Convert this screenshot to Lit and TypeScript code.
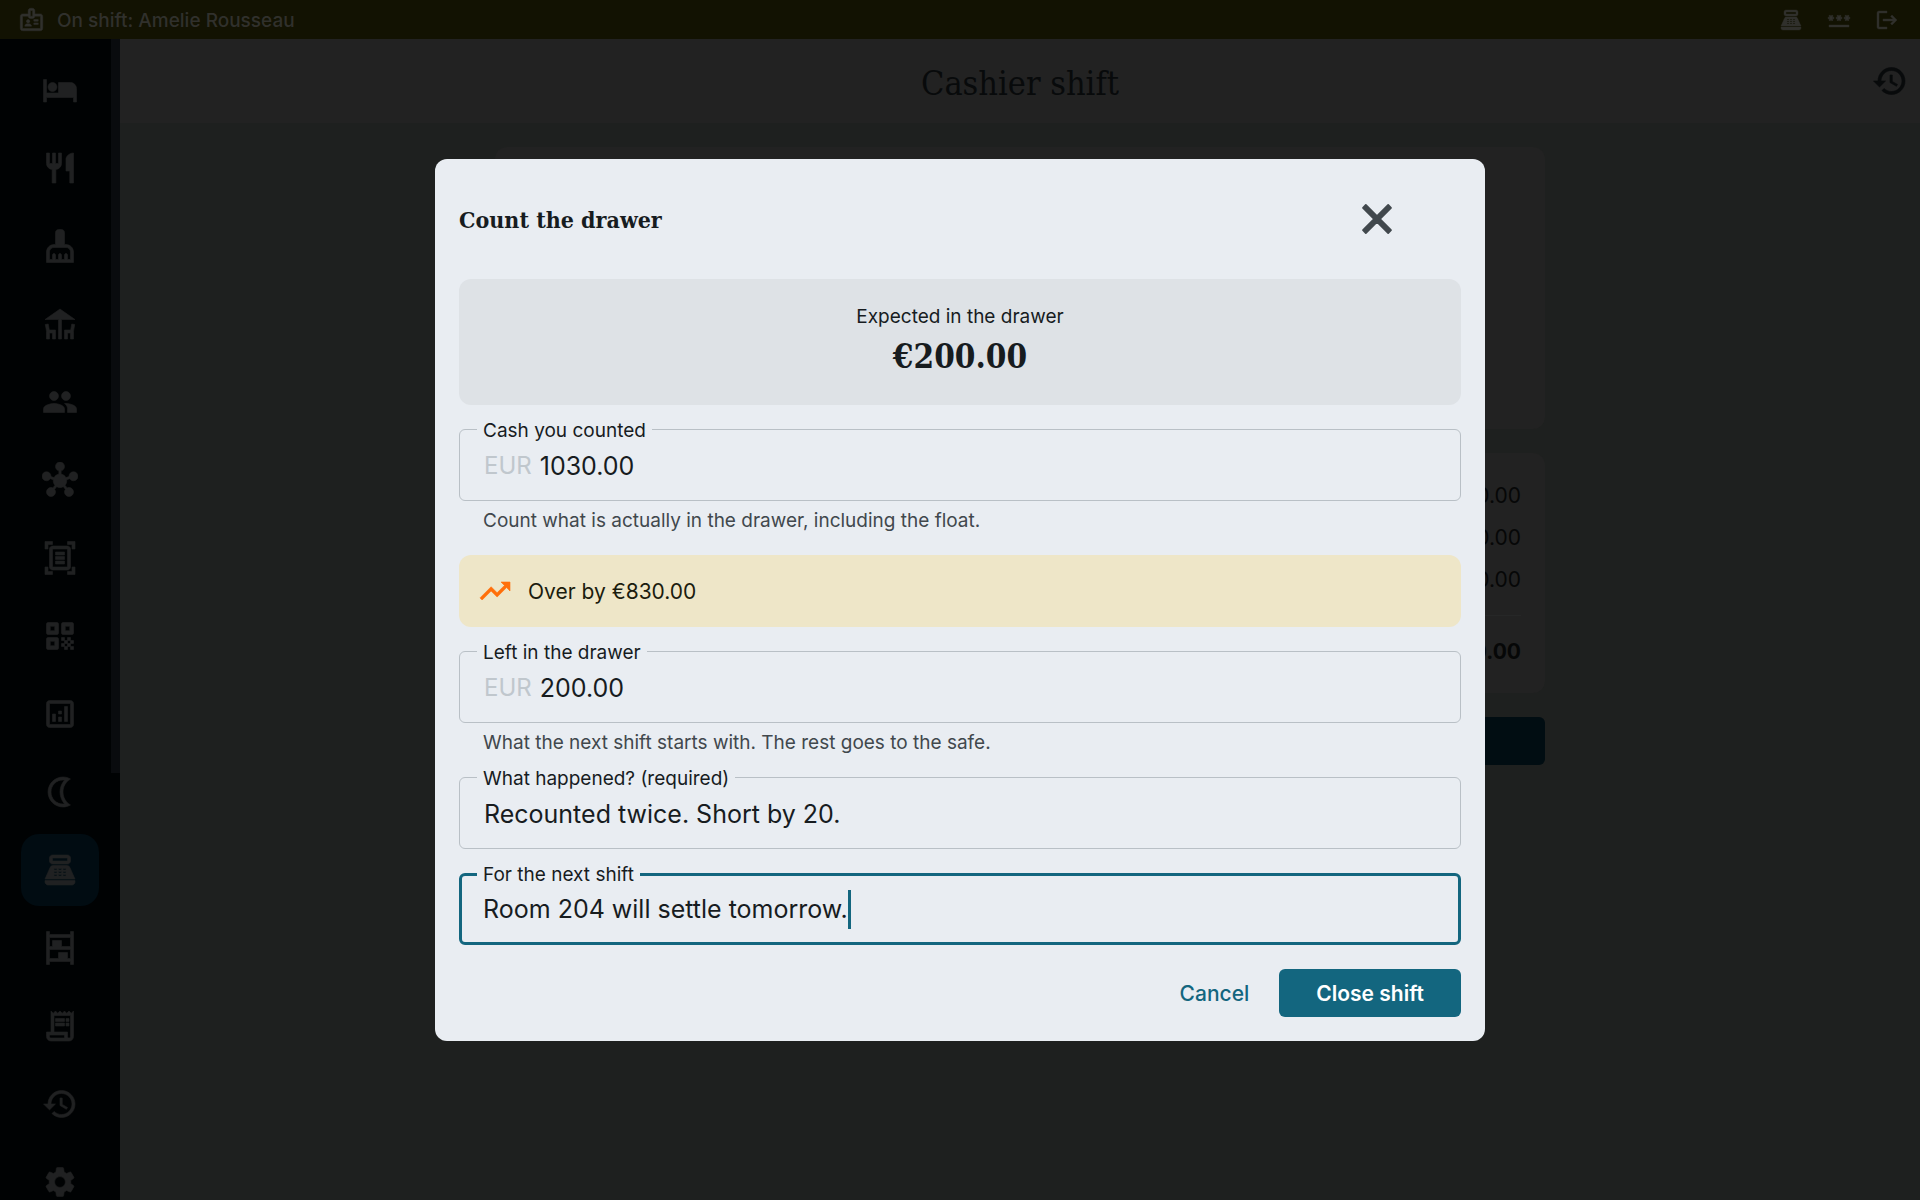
import { LitElement, html, css, svg, nothing } from "lit";
import { customElement, property } from "lit/decorators.js";
import { classMap } from "lit/directives/class-map.js";

const icons: Record<string, unknown> = {
  bed: svg`<path d="M7 13c1.66 0 3-1.34 3-3S8.66 7 7 7s-3 1.34-3 3 1.34 3 3 3zm12-6h-8v7H3V5H1v15h2v-3h18v3h2v-9c0-2.21-1.79-4-4-4z"/>`,
  restaurant: svg`<path d="M11 9H9V2H7v7H5V2H3v7c0 2.12 1.66 3.84 3.75 3.97V22h2.5v-9.03C11.34 12.84 13 11.12 13 9V2h-2v7zm5-3v8h2.5v8H21V2c-2.76 0-5 2.24-5 4z"/>`,
  cleaning: svg`<path d="M16 11h-1V3c0-1.1-.9-2-2-2h-2c-1.1 0-2 .9-2 2v8H8c-2.76 0-5 2.24-5 5v7h18v-7c0-2.76-2.24-5-5-5zm3 10h-2v-3c0-.55-.45-1-1-1s-1 .45-1 1v3h-2v-3c0-.55-.45-1-1-1s-1 .45-1 1v3H9v-3c0-.55-.45-1-1-1s-1 .45-1 1v3H5v-5c0-1.65 1.35-3 3-3h8c1.65 0 3 1.35 3 3v5z"/>`,
  deck: svg`<path d="M22 9L12 2 2 9h9v13h2V9zM4.14 12l-1.96.37.82 4.37V22h2l.02-4H7v4h2v-6H4.9zM19.1 16H15v6h2v-4h1.98l.02 4h2v-5.26l.82-4.37-1.96-.37z"/>`,
  people: svg`<path d="M16 11c1.66 0 2.99-1.34 2.99-3S17.66 5 16 5c-1.66 0-3 1.34-3 3s1.34 3 3 3zm-8 0c1.66 0 2.99-1.34 2.99-3S9.66 5 8 5C6.34 5 5 6.34 5 8s1.34 3 3 3zm0 2c-2.33 0-7 1.17-7 3.5V19h14v-2.5c0-2.33-4.67-3.5-7-3.5zm8 0c-.29 0-.62.02-.97.05 1.16.84 1.97 1.97 1.97 3.45V19h6v-2.5c0-2.33-4.67-3.5-7-3.5z"/>`,
  hub: svg`<path d="M8.4,18.2C8.78,18.7,9,19.32,9,20c0,1.66-1.34,3-3,3s-3-1.34-3-3s1.34-3,3-3c0.44,0,0.85,0.09,1.23,0.26l1.41-1.77c-0.92-1.03-1.29-2.39-1.09-3.69l-2.03-0.68C4.98,11.95,4.06,12.5,3,12.5c-1.66,0-3-1.34-3-3s1.34-3,3-3s3,1.34,3,3c0,0.07,0,0.14-0.01,0.21l2.03,0.68c0.64-1.21,1.82-2.09,3.22-2.32l0-2.16C9.96,5.57,9,4.4,9,3c0-1.66,1.34-3,3-3s3,1.34,3,3c0,1.4-0.96,2.57-2.25,2.91v2.16c1.4,0.23,2.58,1.11,3.22,2.32l2.03-0.68C18,9.64,18,9.57,18,9.5c0-1.66,1.34-3,3-3s3,1.34,3,3s-1.34,3-3,3c-1.06,0-1.98-0.55-2.52-1.37l-2.03,0.68c0.2,1.29-0.16,2.65-1.09,3.69l1.41,1.77C17.15,17.09,17.56,17,18,17c1.66,0,3,1.34,3,3s-1.34,3-3,3s-3-1.34-3-3c0-0.68,0.22-1.3,0.6-1.8l-1.41-1.77c-1.35,0.75-3.01,0.76-4.37,0L8.4,18.2z"/>`,
  scanner: svg`<path fill-rule="evenodd" d="M7 3H4v3H2V1h5v2zm15 3V1h-5v2h3v3h2zM7 21H4v-3H2v5h5v-2zm13-3v3h-3v2h5v-5h-2zM19 18c0 1.1-.9 2-2 2H7c-1.1 0-2-.9-2-2V6c0-1.1.9-2 2-2h10c1.1 0 2 .9 2 2v12zM17 6H7v12h10V6zm-2 2H9v2h6V8zm0 3H9v2h6v-2zm0 3H9v2h6v-2z"/>`,
  qr: svg`<path fill-rule="evenodd" d="M4 3h6a1 1 0 0 1 1 1v6a1 1 0 0 1-1 1H4a1 1 0 0 1-1-1V4a1 1 0 0 1 1-1zM5.5 5.5v3h3v-3zM14 3h6a1 1 0 0 1 1 1v6a1 1 0 0 1-1 1h-6a1 1 0 0 1-1-1V4a1 1 0 0 1 1-1zM15.5 5.5v3h3v-3zM4 13h6a1 1 0 0 1 1 1v6a1 1 0 0 1-1 1H4a1 1 0 0 1-1-1v-6a1 1 0 0 1 1-1zM5.5 15.5v3h3v-3zM13 13h2v2h-2zM17 13h2v2h-2zM15 15h2v2h-2zM19 15h2v2h-2zM13 17h2v2h-2zM17 17h2v2h-2zM15 19h2v2h-2zM19 19h2v2h-2z"/>`,
  analytics: svg`<path fill-rule="evenodd" d="M19 3H5c-1.1 0-2 .9-2 2v14c0 1.1.9 2 2 2h14c1.1 0 2-.9 2-2V5c0-1.1-.9-2-2-2zm0 16H5V5h14v14zM7 12h2v5H7zM15 7h2v10h-2zM11 14h2v3h-2zM11 10h2v2h-2z"/>`,
  moon: svg`<path fill-rule="evenodd" d="M14 2c1.82 0 3.53.5 5 1.35-2.99 1.73-5 4.95-5 8.65s2.01 6.92 5 8.65C17.53 21.5 15.82 22 14 22 8.48 22 4 17.52 4 12S8.48 2 14 2zM14 4c-4.41 0-8 3.59-8 8s3.59 8 8 8c.34 0 .68-.02 1.01-.07C13.1 17.7 12 14.92 12 12s1.1-5.7 3.01-7.93C14.68 4.02 14.34 4 14 4z"/>`,
  register: svg`<path fill-rule="evenodd" d="M17 2H7c-1.1 0-2 .9-2 2v2c0 1.1.9 2 2 2h10c1.1 0 2-.9 2-2V4c0-1.1-.9-2-2-2zm0 4H7V4h10v2zM20 22H4c-1.1 0-2-.9-2-2v-1h20v1c0 1.1-.9 2-2 2zM18.53 10.19C18.21 9.47 17.49 9 16.7 9H7.3c-.79 0-1.51.47-1.83 1.19L2 18h20l-3.47-7.81zM8 11h2v1H8zM8 13h2v1H8zM8 15h2v1H8zM11 11h2v1h-2zM11 13h2v1h-2zM11 15h2v1h-2zM14 11h2v1h-2zM14 13h2v1h-2zM14 15h2v1h-2z"/>`,
  shelves: svg`<path fill-rule="evenodd" d="M19 1v2H5V1H3v22h2v-2h14v2h2V1h-2zM19 5v6h-6V7H7v4H5V5h14zM5 13h14v6h-2v-4h-6v4H5v-6z"/>`,
  receipt: svg`<path d="M19.5 3.5L18 2l-1.5 1.5L15 2l-1.5 1.5L12 2l-1.5 1.5L9 2 7.5 3.5 6 2v14H3v3c0 1.66 1.34 3 3 3h12c1.66 0 3-1.34 3-3V2l-1.5 1.5zM15 20H6c-.55 0-1-.45-1-1v-1h10v2zm4-1c0 .55-.45 1-1 1s-1-.45-1-1v-3H8V5h11v14z"/><path d="M9 7h6v2H9zM16 7h2v2h-2zM9 10h6v2H9zM16 10h2v2h-2z"/>`,
  history: svg`<path d="M13 3c-4.97 0-9 4.03-9 9H1l3.89 3.89.07.14L9 12H6c0-3.87 3.13-7 7-7s7 3.13 7 7-3.13 7-7 7c-1.93 0-3.68-.79-4.94-2.06l-1.42 1.42C8.27 19.99 10.51 21 13 21c4.97 0 9-4.03 9-9s-4.03-9-9-9zm-1 5v5l4.28 2.54.72-1.21-3.5-2.08V8H12z"/>`,
  settings: svg`<path d="M19.14 12.94c.04-.3.06-.61.06-.94 0-.32-.02-.64-.07-.94l2.03-1.58c.18-.14.23-.41.12-.61l-1.92-3.32c-.12-.22-.37-.29-.59-.22l-2.39.96c-.5-.38-1.03-.7-1.62-.94l-.36-2.54c-.04-.24-.24-.41-.48-.41h-3.84c-.24 0-.43.17-.47.41l-.36 2.54c-.59.24-1.13.57-1.62.94l-2.39-.96c-.22-.08-.47 0-.59.22L2.74 8.87c-.12.21-.08.47.12.61l2.03 1.58c-.05.3-.09.63-.09.94s.02.64.07.94l-2.03 1.58c-.18.14-.23.41-.12.61l1.92 3.32c.12.22.37.29.59.22l2.39-.96c.5.38 1.03.7 1.62.94l.36 2.54c.05.24.24.41.48.41h3.84c.24 0 .44-.17.47-.41l.36-2.54c.59-.24 1.13-.56 1.62-.94l2.39.96c.22.08.47 0 .59-.22l1.92-3.32c.12-.22.07-.47-.12-.61l-2.01-1.58zM12 15.6c-1.98 0-3.6-1.62-3.6-3.6s1.62-3.6 3.6-3.6 3.6 1.62 3.6 3.6-1.62 3.6-3.6 3.6z"/>`,
  badge: svg`<path fill-rule="evenodd" d="M20 7h-5V4c0-1.1-.9-2-2-2h-2c-1.1 0-2 .9-2 2v3H4c-1.1 0-2 .9-2 2v11c0 1.1.9 2 2 2h16c1.1 0 2-.9 2-2V9c0-1.1-.9-2-2-2zm-9-3h2v5h-2V4zm9 16H4V9h5c0 1.1.9 2 2 2h2c1.1 0 2-.9 2-2h5v11z"/><circle cx="9" cy="13.5" r="1.5"/><path d="M11.08 16.18C10.44 15.9 9.74 15.75 9 15.75s-1.44.15-2.08.43C6.36 16.42 6 16.96 6 17.57V18h6v-.43c0-.61-.36-1.15-.92-1.39zM14 12h4v1.5h-4zM14 15h4v1.5h-4z"/>`,
  password: svg`<path d="M2 17h20v2H2v-2zm1.15-4.05L4 11.47l.85 1.48 1.3-.75-.85-1.48H7v-1.5H5.3l.85-1.47L4.85 7 4 8.47 3.15 7l-1.3.75.85 1.47H1v1.5h1.7l-.85 1.48 1.3.75zm6.7-.75l1.3.75.85-1.48.85 1.48 1.3-.75-.85-1.48H15v-1.5h-1.7l.85-1.47-1.3-.75L12 8.47 11.15 7l-1.3.75.85 1.47H9v1.5h1.7l-.85 1.48zM23 9.22h-1.7l.85-1.47-1.3-.75L20 8.47 19.15 7l-1.3.75.85 1.47H17v1.5h1.7l-.85 1.48 1.3.75.85-1.48.85 1.48 1.3-.75-.85-1.48H23v-1.5z"/>`,
  logout: svg`<path d="M17 7l-1.41 1.41L18.17 11H8v2h10.17l-2.58 2.58L17 17l5-5zM4 5h8V3H4c-1.1 0-2 .9-2 2v14c0 1.1.9 2 2 2h8v-2H4V5z"/>`,
  close: svg`<path stroke-width="0.9" stroke-linejoin="round" d="M19 6.41L17.59 5 12 10.59 6.41 5 5 6.41 10.59 12 5 17.59 6.41 19 12 13.41 17.59 19 19 17.59 13.41 12z"/>`,
  trending: svg`<path d="M16 6l2.29 2.29-4.88 4.88-4-4L2 16.59 3.41 18l6-6 4 4 6.3-6.29L22 12V6z"/>`,
};

@customElement("app-icon")
export class AppIcon extends LitElement {
  @property() name = "";

  static styles = css`
    :host { display: block; flex: none; width: 36px; height: 36px; }
    .glyph { display: block; width: 100%; height: 100%; fill: currentColor; stroke: currentColor; stroke-width: 0.4; }
  `;

  render() {
    return html`<svg class="glyph" viewBox="0 0 24 24" aria-hidden="true">${icons[this.name]}</svg>`;
  }
}

@customElement("text-field")
export class TextField extends LitElement {
  @property() label = "";
  @property() value = "";
  @property() prefixText = "";
  @property() helper = "";
  @property({ type: Boolean }) active = false;

  static styles = css`
    :host { display: block; }
    * { box-sizing: border-box; }
    .box {
      position: relative;
      display: flex;
      align-items: center;
      height: 72px;
      padding: 2px 24px 0;
      border: 1px solid #b9c0c6;
      border-radius: 6px;
    }
    .box.active { border: 3px solid #13667f; padding: 0 21px; }
    .label {
      position: absolute;
      top: -11px;
      left: 17px;
      padding: 0 6px;
      background: #e9edf2;
      font-size: 19px;
      line-height: 24px;
      color: #171c1f;
    }
    .active .label { top: -13px; left: 15px; }
    .prefix { margin-right: 8px; font-size: 24px; line-height: 36px; color: #c0c7cd; }
    .input {
      min-width: 0;
      flex: 1;
      padding: 0;
      border: 0;
      outline: 0;
      background: none;
      font: inherit;
      font-size: 25px;
      line-height: 36px;
      color: #171c1f;
    }
    .active .input { flex: none; max-width: 100%; field-sizing: content; caret-color: transparent; }
    .caret { width: 3px; height: 39px; background: #13667f; }
    .helper { margin: 0; padding: 8px 24px 0; height: 30px; font-size: 19px; line-height: 24px; color: #41484d; }
  `;

  render() {
    return html`
      <div class=${classMap({ box: true, active: this.active })}>
        <label class="label" for="control">${this.label}</label>
        ${this.prefixText ? html`<span class="prefix">${this.prefixText}</span>` : nothing}
        <input class="input" id="control" type="text" .value=${this.value} />
        ${this.active ? html`<span class="caret"></span>` : nothing}
      </div>
      ${this.helper ? html`<p class="helper">${this.helper}</p>` : nothing}
    `;
  }
}

const NAV = [
  ["bed", "Rooms"], ["restaurant", "Restaurant"], ["cleaning", "Housekeeping"], ["deck", "Terrace"],
  ["people", "Guests"], ["hub", "Channels"], ["scanner", "Scanner"], ["qr", "QR codes"],
  ["analytics", "Reports"], ["moon", "Night audit"], ["register", "Cashier"], ["shelves", "Stock"],
  ["receipt", "Invoices"], ["history", "History"], ["settings", "Settings"],
];

@customElement("app-root")
export class AppRoot extends LitElement {
  static styles = css`
    :host {
      display: flex;
      flex-direction: column;
      height: 100vh;
      overflow: hidden;
      background: #1e201f;
      font-family: Inter, "Liberation Sans", sans-serif;
      color: #171c1f;
    }
    * { box-sizing: border-box; }
    button { padding: 0; border: 0; background: none; font: inherit; color: inherit; }
    .topbar {
      display: flex;
      flex: none;
      align-items: center;
      gap: 12px;
      height: 39px;
      padding: 0 21px 0 18px;
      background: #121202;
      color: #30302c;
      font-size: 19px;
      font-weight: 500;
    }
    .who { padding-top: 2px; }
    .badge { width: 27px; height: 27px; }
    .tools { display: flex; gap: 24px; margin-left: auto; }
    .tool { width: 24px; height: 24px; }
    .body { display: flex; flex: 1; min-height: 0; }
    .rail { display: flex; flex: none; width: 120px; background: #000203; overflow: hidden; }
    .nav { display: flex; flex: 1; flex-direction: column; gap: 6px; padding: 15px 12px 0 21px; }
    .item {
      display: grid;
      flex: none;
      place-items: center;
      height: 72px;
      border-radius: 18px;
      color: #202122;
    }
    .item.current { background: #010c12; }
    .thumb { width: 9px; height: calc(63.3% - 1px); background: #090b0e; }
    .page { display: flex; flex: 1; flex-direction: column; min-width: 0; }
    .pagehead {
      display: grid;
      flex: none;
      grid-template-columns: 36px 1fr 36px;
      align-items: center;
      height: 84px;
      padding: 0 12px;
      background: #222222;
      color: #080a0b;
    }
    .title {
      grid-column: 2;
      margin: 0;
      padding-top: 3px;
      text-align: center;
      font: 400 34px/42px "Roboto Slab", "DejaVu Serif Condensed", "DejaVu Serif", serif;
    }
    .column {
      display: flex;
      flex-direction: column;
      gap: 24px;
      width: 100%;
      max-width: 1098px;
      margin: 0 auto;
      padding: 24px;
    }
    .card { border-radius: 12px; background: #222222; }
    .summary { min-height: 282px; }
    .amounts {
      display: flex;
      flex-direction: column;
      gap: 6px;
      padding: 25px 24px 23px;
      text-align: right;
      font-size: 21px;
      line-height: 36px;
      color: #060707;
    }
    .rule { width: 100%; height: 1px; margin: 11px 0 12px; border: 0; background: #262727; }
    .total { font-weight: 700; }
    .under { height: 48px; border-radius: 6px; background: #010d12; }
    .scrim { position: fixed; inset: 0; display: grid; place-items: center; }
    .dialog {
      display: flex;
      flex-direction: column;
      gap: 24px;
      width: min(1050px, 90vw);
      padding: 0 24px 24px;
      border-radius: 12px;
      background: #e9edf2;
    }
    .head {
      display: flex;
      align-items: center;
      justify-content: space-between;
      height: 120px;
      margin-bottom: -24px;
      padding-right: 60px;
    }
    .heading {
      margin: 0;
      padding-top: 2px;
      font: 700 23px/36px "Roboto Slab", "DejaVu Serif Condensed", "DejaVu Serif", serif;
    }
    .close { color: #41484d; }
    .close app-icon { width: 48px; height: 48px; }
    .expected {
      display: flex;
      flex-direction: column;
      align-items: center;
      justify-content: center;
      height: 126px;
      border-radius: 12px;
      background: #dee2e6;
    }
    .caption { font-size: 19px; line-height: 30px; }
    .sum { font: 700 33px/50px "Roboto Slab", "DejaVu Serif Condensed", "DejaVu Serif", serif; }
    .notice {
      display: flex;
      align-items: center;
      gap: 15px;
      height: 72px;
      padding: 0 18px;
      border-radius: 12px;
      background: #eee6c8;
      font-size: 21px;
      color: #1b1c0e;
    }
    .notice app-icon { color: #ff6f0a; }
    .actions { display: flex; justify-content: flex-end; gap: 12px; }
    .cancel, .confirm { height: 48px; font-size: 21px; border-radius: 6px; }
    .cancel { padding: 0 18px; font-weight: 500; color: #13667f; }
    .confirm { padding: 0 37px; font-weight: 600; background: #13667f; color: #ffffff; }
  `;

  render() {
    return html`
      <header class="topbar">
        <app-icon class="badge" name="badge"></app-icon>
        <span class="who">On shift: Amelie Rousseau</span>
        <div class="tools">
          <button aria-label="Cashier"><app-icon class="tool" name="register"></app-icon></button>
          <button aria-label="Change PIN"><app-icon class="tool" name="password"></app-icon></button>
          <button aria-label="Log out"><app-icon class="tool" name="logout"></app-icon></button>
        </div>
      </header>
      <div class="body">
        <div class="rail">
          <nav class="nav">
            ${NAV.map(([icon, label]) => html`
              <a class=${classMap({ item: true, current: icon === "register" })} href="#${icon}" aria-label=${label}>
                <app-icon name=${icon}></app-icon>
              </a>`)}
          </nav>
          <div class="thumb"></div>
        </div>
        <main class="page">
          <div class="pagehead">
            <h1 class="title">Cashier shift</h1>
            <button aria-label="Shift history"><app-icon name="history"></app-icon></button>
          </div>
          <div class="column">
            <section class="card summary"></section>
            <section class="card amounts">
              <span>€200.00</span>
              <span>€0.00</span>
              <span>€0.00</span>
              <hr class="rule" />
              <span class="total">€200.00</span>
            </section>
            <button class="under" aria-label="Close shift"></button>
          </div>
        </main>
      </div>
      <div class="scrim">
        <section class="dialog" role="dialog" aria-modal="true" aria-labelledby="heading">
          <div class="head">
            <h2 class="heading" id="heading">Count the drawer</h2>
            <button class="close" aria-label="Close"><app-icon name="close"></app-icon></button>
          </div>
          <div class="expected">
            <span class="caption">Expected in the drawer</span>
            <span class="sum">€200.00</span>
          </div>
          <text-field label="Cash you counted" prefixText="EUR" value="1030.00"
            helper="Count what is actually in the drawer, including the float."></text-field>
          <div class="notice" role="status">
            <app-icon name="trending"></app-icon>
            <span>Over by €830.00</span>
          </div>
          <text-field label="Left in the drawer" prefixText="EUR" value="200.00"
            helper="What the next shift starts with. The rest goes to the safe."></text-field>
          <text-field label="What happened? (required)" value="Recounted twice. Short by 20."></text-field>
          <text-field label="For the next shift" value="Room 204 will settle tomorrow." active></text-field>
          <div class="actions">
            <button class="cancel">Cancel</button>
            <button class="confirm">Close shift</button>
          </div>
        </section>
      </div>
    `;
  }
}
